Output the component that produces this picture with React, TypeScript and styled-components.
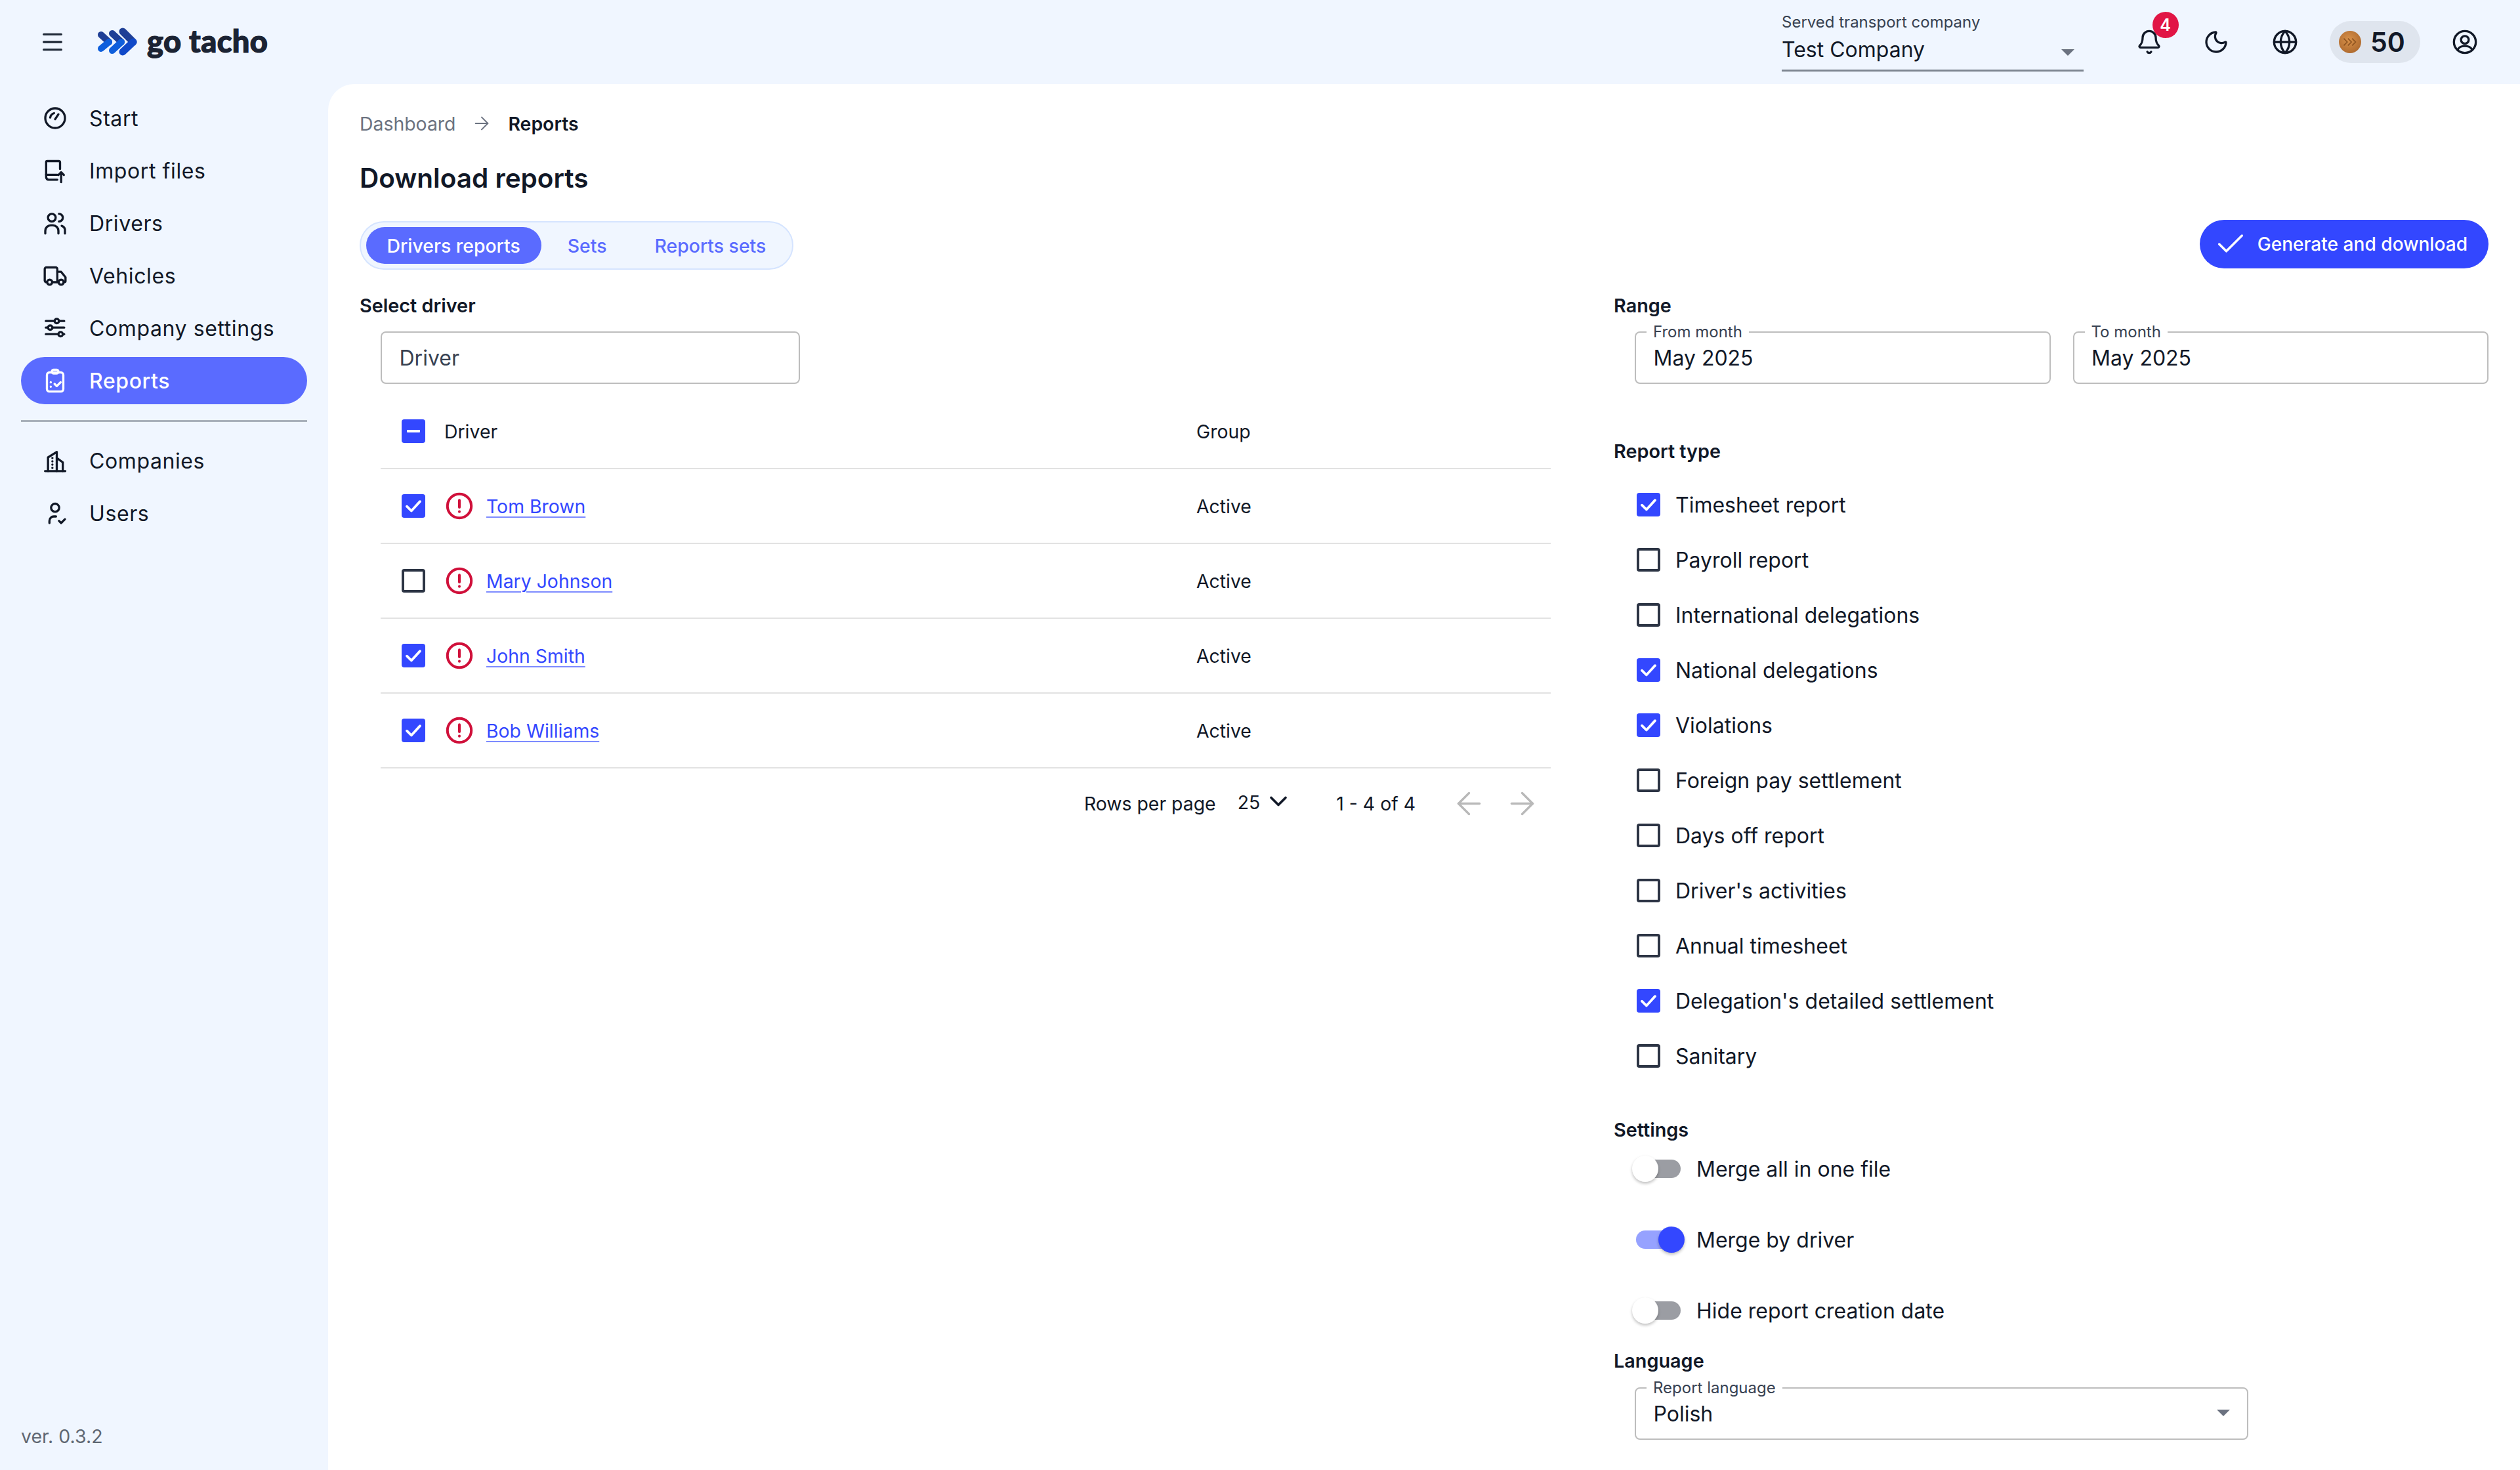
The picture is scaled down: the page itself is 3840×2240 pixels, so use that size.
import React from "react";
import styled, { createGlobalStyle } from "styled-components";
import { ArrowLeft, ArrowRight, Bell, Check, ChevronDown, Globe, Menu, Moon } from "lucide-react";

const Global = createGlobalStyle`
  html, body { margin: 0; padding: 0; background: #f0f6ff; }
  body { font-family: Inter, "Liberation Sans", sans-serif; color: #111827; }
  * { box-sizing: border-box; }
`;

const PRIMARY = "#3347ff";
const ACTIVE = "#5a6bff";

const Page = styled.div`
  width: 3840px; height: 2240px; display: flex; flex-direction: column;
  background: #f0f6ff; overflow: hidden;
`;
const Header = styled.header`
  height: 128px; flex: none; display: flex; align-items: center; padding: 0 64px 0 60px;
`;
const MenuButton = styled.div`display: flex; width: 40px; height: 40px; color: #1f2937;`;
const Logo = styled.div`display: flex; align-items: center; margin-left: 48px; gap: 14px;`;
const LogoText = styled.span`
  font-family: Lato, sans-serif; font-weight: 900; font-size: 47px; line-height: 60px; color: #1b2333; letter-spacing: 0.4px;
  -webkit-text-stroke: 1.2px #1b2333; margin-top: -4px;
`;
const HeaderRight = styled.div`margin-left: auto; align-self: stretch; display: flex; align-items: center;`;
const CompanySelect = styled.div`
  width: 460px; height: 90px; margin-top: 19px; align-self: flex-start; display: flex; flex-direction: column;
  border-bottom: 3px solid #7d8590; position: relative;
`;
const CompanyLabel = styled.div`font-size: 24px; line-height: 30px; color: #374151;`;
const CompanyValue = styled.div`font-size: 32px; line-height: 40px; margin-top: 7px; color: #111827;`;
const Caret = styled.span`
  position: absolute; width: 0; height: 0; border-left: 10px solid transparent; border-right: 10px solid transparent;
  border-top: 10px solid #6b7280; right: ${p => p.$right}px; top: ${p => p.$top}px;
`;
const IconSlot = styled.div`
  width: 40px; height: 40px; display: flex; position: relative; color: #111827; margin-left: ${p => p.$ml}px;
`;
const Badge = styled.span`
  position: absolute; top: -26px; left: 24.5px; width: 40px; height: 40px; border-radius: 50%;
  background: #e11545; color: #fff; font-size: 25px; font-weight: 600; display: flex; align-items: center; justify-content: center;
`;
const Chip = styled.div`
  width: 138px; height: 64px; margin-left: 48px; border-radius: 32px; background: #dfe5ee; display: flex; align-items: center; padding-left: 14px; gap: 14px;
`;
const ChipValue = styled.span`font-size: 41px; font-weight: 600; color: #111827; line-height: 1;`;

const Body = styled.div`flex: 1; display: flex; min-height: 0;`;
const Sidebar = styled.nav`
  width: 500px; flex: none; padding: 16px 32px 31px; display: flex; flex-direction: column;
`;
const NavItem = styled.div`
  height: 72px; margin-bottom: 8px; border-radius: 36px; display: flex; align-items: center; padding-left: 32px; gap: 32px;
  font-size: 32px; font-weight: ${p => p.$active ? 500 : 400}; background: ${p => p.$active ? ACTIVE : "transparent"};
  color: ${p => p.$active ? "#fff" : "#111827"}; letter-spacing: 0.6px;
`;
const NavIcon = styled.svg`width: 40px; height: 40px; flex: none; fill: none; stroke: currentColor; stroke-width: 2; stroke-linecap: round; stroke-linejoin: round;`;
const Divider = styled.div`height: 3px; background: #a9b1bb; margin: 16px 0 23px;`;
const Version = styled.div`margin-top: auto; font-size: 28.5px; line-height: 40px; color: #5f6773;`;

const Main = styled.main`
  flex: 1; background: #fff; border-top-left-radius: 40px; padding: 35px 48px 0; display: flex; flex-direction: column; min-width: 0;
`;
const Crumbs = styled.div`display: flex; align-items: center; height: 50px; font-size: 28.4px;`;
const CrumbLink = styled.span`color: #6b7280;`;
const CrumbArrow = styled.span`display: flex; color: #6b7280; margin: 0 24px 0 24px;`;
const CrumbCurrent = styled.span`font-weight: 600; color: #111827;`;
const Title = styled.h1`margin: 29px 0 0; font-size: 40.5px; line-height: 60px; font-weight: 600; color: #111827;`;
const Toolbar = styled.div`margin-top: 35px; display: flex; justify-content: space-between; align-items: flex-start;`;
const Tabs = styled.div`
  height: 74px; display: flex; align-items: center; padding: 0 4px 0 7.5px; border: 2.5px solid #d5e4ff; border-radius: 37px; background: #f0f6ff;
`;
const Tab = styled.div`
  height: 56px; border-radius: 28px; display: flex; align-items: center; padding: 0 ${p => p.$active ? 32 : 36}px; margin-left: ${p => p.$ml || 0}px;
  font-size: 28.4px; font-weight: 500; background: ${p => p.$active ? ACTIVE : "transparent"}; color: ${p => p.$active ? "#fff" : ACTIVE};
`;
const GenerateButton = styled.div`
  height: 74px; margin-top: -2px; border-radius: 37px; background: ${PRIMARY}; color: #fff; display: flex; align-items: center;
  padding: 0 32px 0 21px; gap: 15px; font-size: 28.1px; font-weight: 500;
`;
const Columns = styled.div`margin-top: 35px; display: grid; grid-template-columns: 1815px 1333px; gap: 96px;`;
const Column = styled.section`display: flex; flex-direction: column; min-width: 0;`;
const Heading = styled.h2`margin: ${p => p.$mt || 0}px 0 0; font-size: 28.8px; line-height: 40px; font-weight: 600; color: #111827;`;
const Outlined = styled.div`
  position: relative; height: 80px; border: 2.5px solid #bdbdbd; border-radius: 8px; padding-left: 26.5px; display: flex; align-items: center;
  font-size: 32px; color: ${p => p.$muted ? "#374151" : "#111827"}; background: #fff;
`;
const Notch = styled.span`
  position: absolute; left: 16px; top: -15px; padding: 0 10px; background: #fff; font-size: 24px; line-height: 28px; color: #374151;
`;
const DriverField = styled(Outlined)`width: 639px; margin: 19px 0 0 32px;`;
const Table = styled.div`margin: 16px 0 0 32px;`;
const Row = styled.div`
  height: 114px; display: grid; grid-template-columns: 1243px 540px; align-items: center; border-bottom: 2.5px solid #e2e2e2; font-size: 28.4px;
`;
const RowCell = styled.div`display: flex; align-items: center; padding-left: 32px;`;
const Box = styled.span`
  width: 36px; height: 36px; flex: none; border-radius: 4px; display: flex; align-items: center; justify-content: center;
  background: ${p => p.$on ? PRIMARY : "transparent"}; border: ${p => p.$on ? "none" : "4px solid #2c3444"}; color: #fff;
`;
const Dash = styled.span`width: 20px; height: 4px; background: #fff; border-radius: 1px;`;
const HeadName = styled.span`margin-left: 29px;`;
const AlertIcon = styled.svg`width: 46px; height: 46px; flex: none; margin-left: 29px; fill: none; stroke: #d0103a; stroke-width: 2.1; stroke-linecap: round;`;
const DriverLink = styled.a`
  margin-left: 18px; color: ${PRIMARY}; text-decoration: underline; text-decoration-color: #7d8bff; text-underline-offset: 5px; text-decoration-thickness: 2px;
`;
const Pagination = styled.div`height: 106px; display: flex; align-items: center; justify-content: flex-end; padding-right: 16px; font-size: 28.4px; color: #111827;`;
const PageCount = styled.span`margin-left: 33px; margin-top: -4px;`;
const RowsChevron = styled.span`display: flex; margin: -6px 0 0 6px; color: #111827;`;
const PageRange = styled.span`margin: 0 54px 0 66px;`;
const PageArrow = styled.span`display: flex; color: #b9b9b9; margin-left: ${p => p.$ml || 0}px;`;
const RangeGrid = styled.div`margin: 19px 0 0 32px; display: grid; grid-template-columns: 1fr 1fr; gap: 34px;`;
const CheckList = styled.div`margin-top: 19px; display: flex; flex-direction: column;`;
const CheckRow = styled.div`height: 84px; padding-left: 35px; display: flex; align-items: center; gap: 23px; font-size: 32px; color: #111827;`;
const SwitchList = styled.div`margin-top: 19px; display: flex; flex-direction: column; gap: 68px;`;
const SwitchRow = styled.div`height: 40px; padding-left: 28px; display: flex; align-items: center; gap: 18px; font-size: 32px; color: #111827;`;
const Switch = styled.span`position: relative; width: 80px; height: 40px; flex: none;`;
const Track = styled.span`
  position: absolute; left: 6px; top: 6px; width: 68px; height: 28px; border-radius: 14px; background: ${p => p.$on ? "#96a2ff" : "#9b9da3"};
`;
const Knob = styled.span`
  position: absolute; left: ${p => p.$on ? 40 : 0}px; top: 0; width: 40px; height: 40px; border-radius: 50%;
  background: ${p => p.$on ? PRIMARY : "#fff"}; box-shadow: 0 2.5px 4px rgba(0,0,0,.25);
`;
const LanguageField = styled(Outlined)`width: 935px; margin: 20px 0 0 32px;`;

const CheckMark = () => (
  <svg width="30" height="30" viewBox="0 0 24 24" fill="none" stroke="#fff" strokeWidth="3" strokeLinecap="round" strokeLinejoin="round"><path d="M4 12.5l5.5 5.5L20 6.5" /></svg>
);
const CB = ({ on }: { on?: boolean }) => <Box $on={on}>{on && <CheckMark />}</Box>;
const Alert = () => (
  <AlertIcon viewBox="0 0 24 24"><circle cx="12" cy="12" r="9.500" /><path d="M12 7.500v5.500" /><path d="M12 16.500v.1" /></AlertIcon>
);

const LogoMark = () => (
  <svg width="62" height="46" viewBox="0 0 62 46" fill="none" strokeLinecap="round">
    <path d="M6 12L18 23" stroke="#1f3f96" strokeWidth="10" />
    <path d="M18 23L6 33" stroke="#0f5fdc" strokeWidth="10" />
    <path d="M23 10L37 23" stroke="#1f3f96" strokeWidth="10" />
    <path d="M37 23L23 36" stroke="#0f5fdc" strokeWidth="10" />
    <path d="M39 7L55 23" stroke="#1f3f96" strokeWidth="11" />
    <path d="M55 23L39 38" stroke="#1049c9" strokeWidth="11" />
  </svg>
);
const Coin = () => (
  <svg width="34" height="34" viewBox="0 0 32 32" fill="none" style={{ flex: "none" }}>
    <defs><radialGradient id="coin" cx="0.45" cy="0.4" r="0.7"><stop offset="0" stopColor="#d9924a" /><stop offset="1" stopColor="#a9652b" /></radialGradient></defs>
    <circle cx="16" cy="16" r="16" fill="url(#coin)" />
    <path d="M7 11l5 5-5 5M13 11l5 5-5 5M19 11l5 5-5 5" stroke="#8f5420" strokeWidth="1.600" />
  </svg>
);
const Profile = () => (
  <svg width="40" height="40" viewBox="0 0 24 24" fill="none" stroke="currentColor" strokeWidth="2" strokeLinecap="round">
    <circle cx="12" cy="12" r="10" /><circle cx="12" cy="10" r="3.500" /><path d="M5.500 19c1-2.300 3-3.300 6.500-3.300s5.500 1 6.500 3.300" />
  </svg>
);

const icons: Record<string, React.ReactNode> = {
  start: <><circle cx="12" cy="12" r="9" /><path d="M7.500 11.500a5 5 0 0 1 3.500-4" /><path d="M12 13l3-4.500" /></>,
  import: <><path d="M16.500 10.500V4.500a1.200 1.200 0 0 0-1.200-1.200H4.800a1 1 0 0 0-1 1V18a2.500 2.500 0 0 0 2.300 2.300H14" /><path d="M3.800 15.800H14" /><path d="M17.500 22.500V13.500M15 16l2.500-2.500L20 16" /></>,
  drivers: <><circle cx="9" cy="7" r="3.500" /><path d="M15.500 3.500a3.500 3.500 0 0 1 0 7" /><path d="M3 21.500v-2.500a5 5 0 0 1 5-5h2a5 5 0 0 1 5 5v2.500" /><path d="M18 14.500a4.500 4.500 0 0 1 3 4.500v2.500" /></>,
  vehicles: <><path d="M4.500 18h-.5a1.500 1.500 0 0 1-1.500-1.500V6a1.500 1.500 0 0 1 1.500-1.500h8.500A1.500 1.500 0 0 1 14 6v12" /><path d="M9.500 18h5" /><path d="M14 8.500h3.500l4 5V17a1 1 0 0 1-1 1H20" /><circle cx="7" cy="18" r="2.300" /><circle cx="17.500" cy="18" r="2.300" /></>,
  settings: <><path d="M3.500 5.500h16.800M3.500 11.500h16.800M3.500 17.500h16.800" /><circle cx="13.500" cy="5.500" r="2" fill="#f0f6ff" /><circle cx="7.500" cy="11.500" r="2" fill="#f0f6ff" /><circle cx="17" cy="17.500" r="2" fill="#f0f6ff" /></>,
  reports: <><rect x="4.500" y="4.500" width="15" height="17.500" rx="2.200" /><rect x="9" y="2" width="6" height="3.500" rx="1.700" /><path d="M11.500 15l2 2 3.500-3.500" /><path d="M8 13.500v.1M8 17.500v.1" /></>,
  companies: <><path d="M5.500 21.500V9L13.500 4v17.500" /><path d="M13.500 9.500l5.500 4v8" /><path d="M2.800 21.500h18.500" /><path d="M9.500 9.500v.1M9.500 12.500v.1M9.500 15.500v.1M9.500 18.500v.1" /></>,
  users: <><circle cx="12" cy="7" r="3.700" /><path d="M6.800 21v-2a4 4 0 0 1 4-4h2" /><path d="M15.500 19l2 2 3.500-3.500" /></>,
};

const NAV_TOP = [
  { key: "start", label: "Start" },
  { key: "import", label: "Import files" },
  { key: "drivers", label: "Drivers" },
  { key: "vehicles", label: "Vehicles" },
  { key: "settings", label: "Company settings" },
  { key: "reports", label: "Reports", active: true },
];
const NAV_BOTTOM = [
  { key: "companies", label: "Companies" },
  { key: "users", label: "Users" },
];
const DRIVERS = [
  { name: "Tom Brown", on: true },
  { name: "Mary Johnson", on: false },
  { name: "John Smith", on: true },
  { name: "Bob Williams", on: true },
];
const REPORTS = [
  { name: "Timesheet report", on: true },
  { name: "Payroll report", on: false },
  { name: "International delegations", on: false },
  { name: "National delegations", on: true },
  { name: "Violations", on: true },
  { name: "Foreign pay settlement", on: false },
  { name: "Days off report", on: false },
  { name: "Driver's activities", on: false },
  { name: "Annual timesheet", on: false },
  { name: "Delegation's detailed settlement", on: true },
  { name: "Sanitary", on: false },
];
const SWITCHES = [
  { name: "Merge all in one file", on: false },
  { name: "Merge by driver", on: true },
  { name: "Hide report creation date", on: false },
];

const Nav = ({ item }: { item: { key: string; label: string; active?: boolean } }) => (
  <NavItem $active={item.active}>
    <NavIcon viewBox="0 0 24 24">{icons[item.key]}</NavIcon>
    {item.label}
  </NavItem>
);

export default function App() {
  return (
    <Page>
      <Global />
      <Header>
        <MenuButton><Menu size={40} strokeWidth={2} /></MenuButton>
        <Logo><LogoMark /><LogoText>go tacho</LogoText></Logo>
        <HeaderRight>
          <CompanySelect>
            <CompanyLabel>Served transport company</CompanyLabel>
            <CompanyValue>Test Company</CompanyValue>
            <Caret $right={14} $top={56} />
          </CompanySelect>
          <IconSlot $ml={80}><Bell size={40} strokeWidth={2} /><Badge>4</Badge></IconSlot>
          <IconSlot $ml={62}><Moon size={40} strokeWidth={2} /></IconSlot>
          <IconSlot $ml={65}><Globe size={40} strokeWidth={2} /></IconSlot>
          <Chip><Coin /><ChipValue>50</ChipValue></Chip>
          <IconSlot $ml={48}><Profile /></IconSlot>
        </HeaderRight>
      </Header>
      <Body>
        <Sidebar>
          {NAV_TOP.map(n => <Nav key={n.key} item={n} />)}
          <Divider />
          {NAV_BOTTOM.map(n => <Nav key={n.key} item={n} />)}
          <Version>ver. 0.3.2</Version>
        </Sidebar>
        <Main>
          <Crumbs>
            <CrumbLink>Dashboard</CrumbLink>
            <CrumbArrow><ArrowRight size={32} strokeWidth={1.5} /></CrumbArrow>
            <CrumbCurrent>Reports</CrumbCurrent>
          </Crumbs>
          <Title>Download reports</Title>
          <Toolbar>
            <Tabs>
              <Tab $active>Drivers reports</Tab>
              <Tab $ml={4}>Sets</Tab>
              <Tab $ml={1}>Reports sets</Tab>
            </Tabs>
            <GenerateButton><Check size={52} strokeWidth={1.6} />Generate and download</GenerateButton>
          </Toolbar>
          <Columns>
            <Column>
              <Heading>Select driver</Heading>
              <DriverField $muted>Driver</DriverField>
              <Table>
                <Row>
                  <RowCell><Box $on><Dash /></Box><HeadName>Driver</HeadName></RowCell>
                  <span>Group</span>
                </Row>
                {DRIVERS.map(d => (
                  <Row key={d.name}>
                    <RowCell><CB on={d.on} /><Alert /><DriverLink>{d.name}</DriverLink></RowCell>
                    <span>Active</span>
                  </Row>
                ))}
              </Table>
              <Pagination>
                <span>Rows per page</span>
                <PageCount>25</PageCount>
                <RowsChevron><ChevronDown size={44} strokeWidth={2} /></RowsChevron>
                <PageRange>1 - 4 of 4</PageRange>
                <PageArrow><ArrowLeft size={55} strokeWidth={1.5} /></PageArrow>
                <PageArrow $ml={26}><ArrowRight size={55} strokeWidth={1.5} /></PageArrow>
              </Pagination>
            </Column>
            <Column>
              <Heading>Range</Heading>
              <RangeGrid>
                <Outlined><Notch>From month</Notch>May 2025</Outlined>
                <Outlined><Notch>To month</Notch>May 2025</Outlined>
              </RangeGrid>
              <Heading $mt={83}>Report type</Heading>
              <CheckList>
                {REPORTS.map(r => <CheckRow key={r.name}><CB on={r.on} />{r.name}</CheckRow>)}
              </CheckList>
              <Heading $mt={51}>Settings</Heading>
              <SwitchList>
                {SWITCHES.map(s => (
                  <SwitchRow key={s.name}>
                    <Switch><Track $on={s.on} /><Knob $on={s.on} /></Switch>
                    {s.name}
                  </SwitchRow>
                ))}
              </SwitchList>
              <Heading $mt={37}>Language</Heading>
              <LanguageField>
                <Notch>Report language</Notch>
                Polish
                <Caret $right={26} $top={32} />
              </LanguageField>
            </Column>
          </Columns>
        </Main>
      </Body>
    </Page>
  );
}
